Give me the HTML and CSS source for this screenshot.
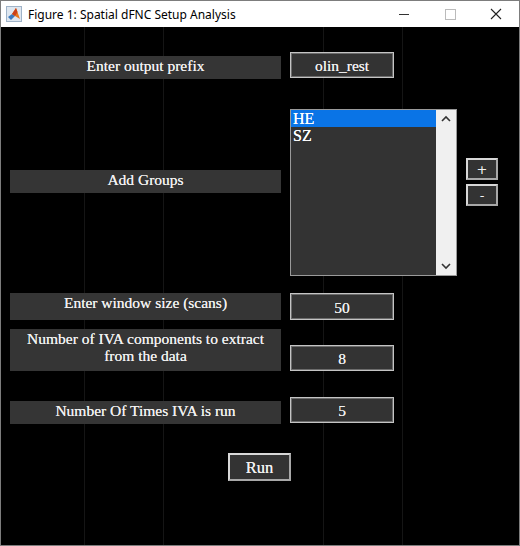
FILE: index.html
```html
<!DOCTYPE html>
<html lang="en">
<head>
    <meta charset="UTF-8">
    <title>Figure 1: Spatial dFNC Setup Analysis</title>
    <link rel="stylesheet" href="styles.css">
</head>
<body>
    <div class="window">
        <div class="titlebar">
            <svg class="app-icon" width="16" height="16" viewBox="0 0 16 16">
                <rect x="0.5" y="0.5" width="15" height="15" fill="#dfe7f0" stroke="#9fb3c8"/>
                <polygon points="2,11 6,8 9,10 5,14" fill="#3b7bbf"/>
                <polygon points="6,8 10,2 14,13 9,10" fill="#e8771e"/>
                <polygon points="10,2 11.5,6 9,10 6,8" fill="#c9411a"/>
            </svg>
            <span class="title">Figure 1: Spatial dFNC Setup Analysis</span>
            <div class="controls">
                <svg width="46" height="26" viewBox="0 0 46 26"><line x1="18" y1="13.5" x2="28" y2="13.5" stroke="#333" stroke-width="1"/></svg>
                <svg width="46" height="26" viewBox="0 0 46 26"><rect x="18.5" y="8.5" width="10" height="10" fill="none" stroke="#bbb" stroke-width="1"/></svg>
                <svg width="46" height="26" viewBox="0 0 46 26"><path d="M18 8 L28 18 M28 8 L18 18" stroke="#222" stroke-width="1.1"/></svg>
            </div>
        </div>

        <div class="figure">
            <div class="row row-prefix">
                <div class="label">Enter output prefix</div>
                <div class="edit">olin_rest</div>
            </div>

            <div class="row row-groups">
                <div class="label">Add Groups</div>
                <div class="listbox">
                    <div class="items">
                        <div class="item selected">HE</div>
                        <div class="item">SZ</div>
                    </div>
                    <div class="scrollbar">
                        <svg width="20" height="14" viewBox="0 0 20 14"><path d="M6 9 L10 5 L14 9" fill="none" stroke="#333" stroke-width="1.6"/></svg>
                        <svg width="20" height="14" viewBox="0 0 20 14"><path d="M6 5 L10 9 L14 5" fill="none" stroke="#333" stroke-width="1.6"/></svg>
                    </div>
                </div>
                <div class="small-buttons">
                    <div class="btn small">+</div>
                    <div class="btn small">-</div>
                </div>
            </div>

            <div class="row row-window">
                <div class="label">Enter window size (scans)</div>
                <div class="edit">50</div>
            </div>

            <div class="row row-comps">
                <div class="label">Number of IVA components to extract<br>from the data</div>
                <div class="edit">8</div>
            </div>

            <div class="row row-times">
                <div class="label">Number Of Times IVA is run</div>
                <div class="edit">5</div>
            </div>

            <div class="btn run">Run</div>
        </div>
    </div>
</body>
</html>
```

FILE: styles.css
```css
body {
    margin: 0;
    padding: 0;
    background: #000;
    font-family: 'Liberation Serif', serif;
}

.window {
    width: 518px;
    height: 545px;
    border: 1px solid #7d7d7d;
    border-top: none;
    background: #000;
    display: flex;
    flex-direction: column;
}

.titlebar {
    height: 26px;
    background: #fff;
    border-top: 1px solid #7d7d7d;
    display: flex;
    align-items: center;
    font-family: 'Noto Sans', 'Liberation Sans', sans-serif;
    font-size: 12px;
    color: #000;
}

.app-icon {
    margin-left: 5px;
    margin-right: 6px;
}

.title {
    flex: 1;
}

.controls {
    display: flex;
}

.figure {
    flex: 1;
    padding-top: 25px;
    padding-left: 9px;
    background:
        linear-gradient(to right,
            transparent 83px, #151515 83px, #151515 84px, transparent 84px,
            transparent 162px, #151515 162px, #151515 163px, transparent 163px,
            transparent 322px, #151515 322px, #151515 323px, transparent 323px,
            transparent 401px, #151515 401px, #151515 402px, transparent 402px);
}

.row {
    display: flex;
    align-items: flex-start;
}

.label {
    width: 271px;
    margin-right: 9px;
    background: #353535;
    color: #f0f0f0;
    font-size: 15.5px;
    line-height: 18px;
    text-align: center;
    box-sizing: border-box;
    text-shadow: 0 0 0.6px #f0f0f0;
}

.edit {
    width: 104px;
    height: 26px;
    box-sizing: border-box;
    border: 1px solid #c4c4c4;
    box-shadow: inset 0 0 0 1px #6c6c6c;
    background: #333;
    color: #f0f0f0;
    font-size: 15.5px;
    display: flex;
    align-items: center;
    justify-content: center;
    padding-top: 2px;
    text-shadow: 0 0 0.6px #f0f0f0;
}

/* row 1 */
.row-prefix .label {
    margin-top: 4px;
    height: 23px;
    padding-top: 1px;
}

/* row 2 */
.row-groups {
    margin-top: 30px;
}

.row-groups .label {
    margin-top: 61px;
    height: 23px;
    padding-top: 1px;
}

.listbox {
    width: 167px;
    height: 167px;
    box-sizing: border-box;
    border: 1px solid #9a9a9a;
    background: #333;
    display: flex;
}

.items {
    flex: 1;
}

.item {
    height: 17px;
    line-height: 17px;
    color: #fff;
    font-size: 16px;
    padding-left: 2px;
    overflow: hidden;
    text-shadow: 0 0 0.6px #fff;
}

.item.selected {
    background: #0a74e6;
}

.scrollbar {
    width: 20px;
    background: #f0f0f0;
    display: flex;
    flex-direction: column;
    justify-content: space-between;
    padding: 2px 0;
}

.small-buttons {
    margin-left: 9px;
    margin-top: 49px;
    display: flex;
    flex-direction: column;
    gap: 4px;
}

.btn {
    box-sizing: border-box;
    background: #333;
    color: #f2f2f2;
    border: 2px solid #d8d8d8;
    border-right-color: #a8a8a8;
    border-bottom-color: #a8a8a8;
    display: flex;
    align-items: center;
    justify-content: center;
}

.btn.small {
    width: 32px;
    height: 22px;
    font-family: 'DejaVu Sans', sans-serif;
    font-size: 13px;
}

/* row 3 */
.row-window {
    margin-top: 17px;
}

.row-window .label {
    height: 27px;
    padding-top: 1px;
}

.row-window .edit {
    height: 27px;
}

/* row 4 */
.row-comps {
    margin-top: 9px;
}

.row-comps .label {
    height: 42px;
    padding-top: 1px;
    line-height: 17px;
}

.row-comps .edit {
    margin-top: 16px;
}

/* row 5 */
.row-times {
    margin-top: 26px;
}

.row-times .label {
    margin-top: 4px;
    height: 23px;
    padding-top: 1px;
}

/* run */
.run {
    margin-top: 29px;
    margin-left: 218px;
    width: 63px;
    height: 28px;
    font-size: 16.5px;
    padding-top: 1px;
    text-shadow: 0 0 0.6px #f2f2f2;
}
```
